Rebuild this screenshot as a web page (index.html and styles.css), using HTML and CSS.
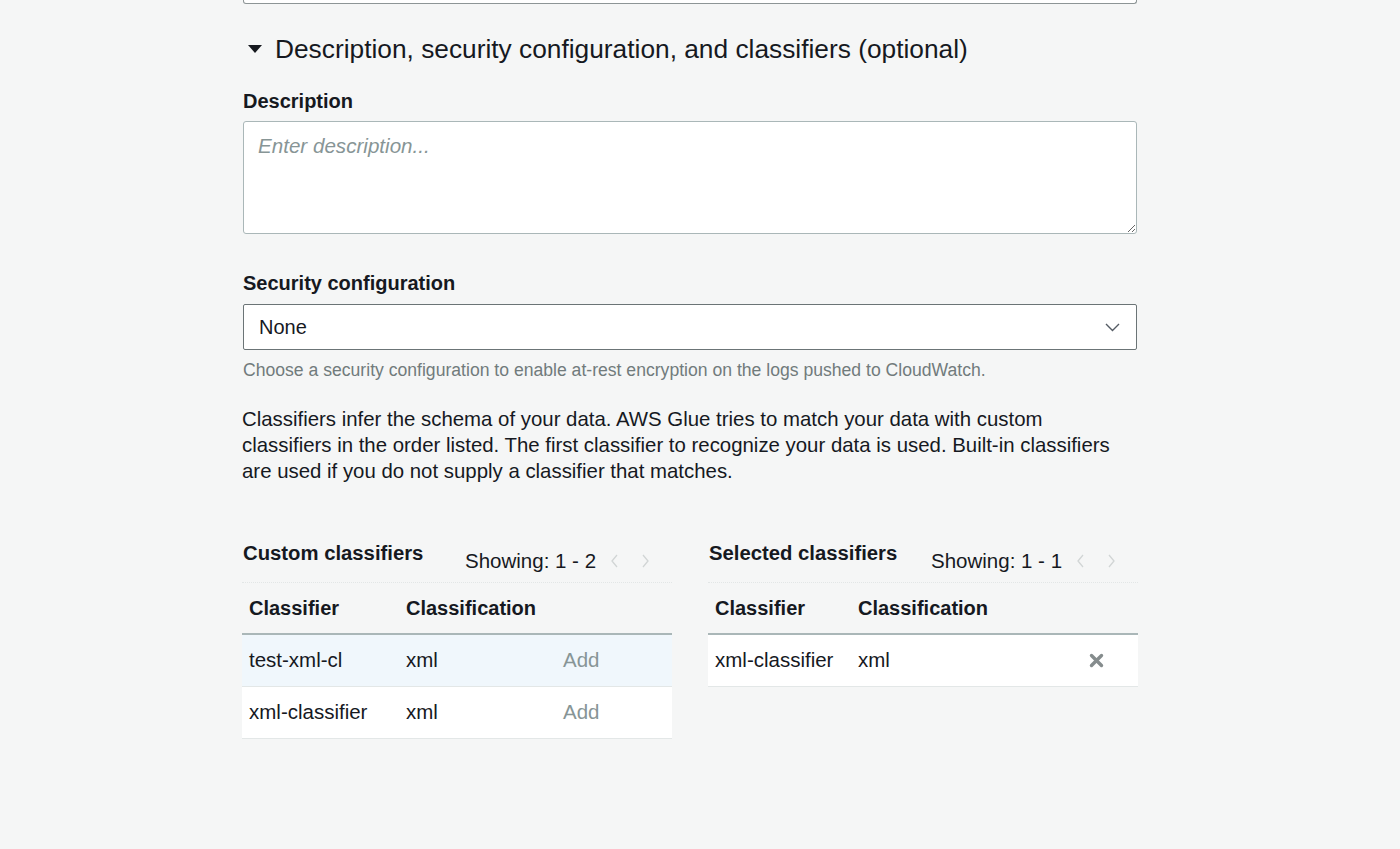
FILE: index.html
```html
<!DOCTYPE html>
<html lang="en">
<head>
<meta charset="utf-8">
<title>Crawler options</title>
<link rel="stylesheet" href="styles.css">
</head>
<body>
<div class="page">
  <div class="topbox"></div>

  <div class="section-head">
    <svg class="caret" width="14" height="8" viewBox="0 0 14 8"><path d="M0 0 L14 0 L7 8 Z" fill="#16191f"/></svg>
    <span class="section-title">Description, security configuration, and classifiers (optional)</span>
  </div>

  <label class="field-label first">Description</label>
  <textarea class="textarea" placeholder="Enter description..."></textarea>

  <label class="field-label second">Security configuration</label>
  <div class="select">
    <span>None</span>
    <svg class="chev" width="15" height="9" viewBox="0 0 15 9"><path d="M1 1 L7.5 7.5 L14 1" fill="none" stroke="#545b64" stroke-width="1.4"/></svg>
  </div>
  <p class="help">Choose a security configuration to enable at-rest encryption on the logs pushed to CloudWatch.</p>

  <p class="intro">Classifiers infer the schema of your data. AWS Glue tries to match your data with custom classifiers in the order listed. The first classifier to recognize your data is used. Built-in classifiers are used if you do not supply a classifier that matches.</p>

  <div class="tables">
    <div class="panel">
      <div class="panel-head">
        <div class="panel-title">Custom classifiers</div>
        <div class="showing">Showing: 1 - 2</div>
        <div class="pager">
          <svg width="9" height="14" viewBox="0 0 9 14"><path d="M7 1 L2 7 L7 13" fill="none" stroke="#d1d5d5" stroke-width="1.3"/></svg>
          <svg width="9" height="14" viewBox="0 0 9 14"><path d="M2 1 L7 7 L2 13" fill="none" stroke="#d1d5d5" stroke-width="1.3"/></svg>
        </div>
      </div>
      <table class="grid left">
        <colgroup><col class="lc1"><col class="lc2"><col></colgroup>
        <thead><tr><th>Classifier</th><th>Classification</th><th></th></tr></thead>
        <tbody>
          <tr class="hover"><td>test-xml-cl</td><td>xml</td><td class="add">Add</td></tr>
          <tr><td>xml-classifier</td><td>xml</td><td class="add">Add</td></tr>
        </tbody>
      </table>
    </div>

    <div class="panel">
      <div class="panel-head">
        <div class="panel-title">Selected classifiers</div>
        <div class="showing">Showing: 1 - 1</div>
        <div class="pager">
          <svg width="9" height="14" viewBox="0 0 9 14"><path d="M7 1 L2 7 L7 13" fill="none" stroke="#d1d5d5" stroke-width="1.3"/></svg>
          <svg width="9" height="14" viewBox="0 0 9 14"><path d="M2 1 L7 7 L2 13" fill="none" stroke="#d1d5d5" stroke-width="1.3"/></svg>
        </div>
      </div>
      <table class="grid right">
        <colgroup><col class="rc1"><col class="rc2"><col></colgroup>
        <thead><tr><th>Classifier</th><th>Classification</th><th></th></tr></thead>
        <tbody>
          <tr class="white"><td>xml-classifier</td><td>xml</td><td class="remove"><svg width="15" height="15" viewBox="0 0 15 15"><path d="M2.5 2.5 L12.5 12.5 M12.5 2.5 L2.5 12.5" stroke="#858c8d" stroke-width="3.4" stroke-linecap="round"/></svg></td></tr>
        </tbody>
      </table>
    </div>
  </div>
</div>
</body>
</html>
```

FILE: styles.css
```css
* { box-sizing: border-box; }

body {
  margin: 0;
  background: #f5f6f6;
  font-family: "Liberation Sans", Arial, Helvetica, sans-serif;
  color: #16191f;
}

.page {
  width: 894px;
  margin-left: 243px;
}

.topbox {
  height: 4px;
  background: #fff;
  border: 1px solid #8d9596;
  border-top: none;
  border-radius: 0 0 3px 3px;
}

.section-head {
  display: flex;
  align-items: center;
  margin-top: 29px;
  height: 30px;
}

.caret {
  margin-left: 5px;
  margin-right: 13px;
  margin-top: 2px;
}

.section-title {
  font-size: 26.3px;
  line-height: 30px;
  margin-top: 2px;
}

.field-label {
  display: block;
  font-weight: bold;
  font-size: 20px;
  line-height: 24px;
}

.field-label.first { margin-top: 26px; }
.field-label.second { margin-top: 37px; }

.textarea {
  display: block;
  width: 894px;
  height: 113px;
  margin-top: 8px;
  padding: 12px 14px;
  border: 1px solid #aab7b8;
  border-radius: 3px;
  background: #fff;
  font-family: "Liberation Sans", Arial, sans-serif;
  font-size: 20.6px;
  line-height: 24px;
  color: #16191f;
  resize: vertical;
  outline: none;
}

.textarea::placeholder {
  color: #879596;
  font-style: italic;
}

.select {
  display: flex;
  align-items: center;
  justify-content: space-between;
  height: 46px;
  margin-top: 9px;
  padding: 0 16px 0 15px;
  background: #fff;
  border: 1px solid #6b7476;
  border-radius: 2px;
  font-size: 20px;
}

.chev { margin-top: 1px; }

.help {
  margin: 10px 0 0;
  font-size: 17.6px;
  line-height: 20px;
  color: #717b7c;
}

.intro {
  margin: 26px 0 0 -1px;
  width: 895px;
  font-size: 20.4px;
  line-height: 26px;
}

.tables {
  display: grid;
  grid-template-columns: 430px 430px;
  column-gap: 36px;
  margin-top: 46px;
  margin-left: -1px;
}

.panel-head {
  display: flex;
  align-items: flex-start;
  height: 53px;
  border-bottom: 1px dotted #e2e6e6;
}

.panel-title {
  width: 223px;
  padding-left: 1px;
  margin-top: 11px;
  font-weight: bold;
  font-size: 20.3px;
  line-height: 24px;
}

.showing {
  margin-top: 19px;
  font-size: 20.5px;
  line-height: 24px;
}

.pager {
  display: flex;
  gap: 22px;
  margin-top: 24px;
  margin-left: 14px;
}

.grid {
  width: 430px;
  border-collapse: collapse;
  table-layout: fixed;
}

.lc1 { width: 157px; }
.lc2 { width: 157px; }
.rc1 { width: 143px; }
.rc2 { width: 231px; }

.grid th {
  height: 51px;
  padding: 0 7px;
  text-align: left;
  font-weight: bold;
  font-size: 20px;
  border-bottom: 2px solid #aab7b8;
}

.grid td {
  height: 52px;
  padding: 0 7px;
  font-size: 20.5px;
  border-bottom: 1px solid #e3e7e7;
  background: #fff;
}

.grid tr.hover td { background: #f0f7fc; }

.grid td.add { color: #879596; }

.grid td.remove svg { display: block; margin-top: 1px; }
```
